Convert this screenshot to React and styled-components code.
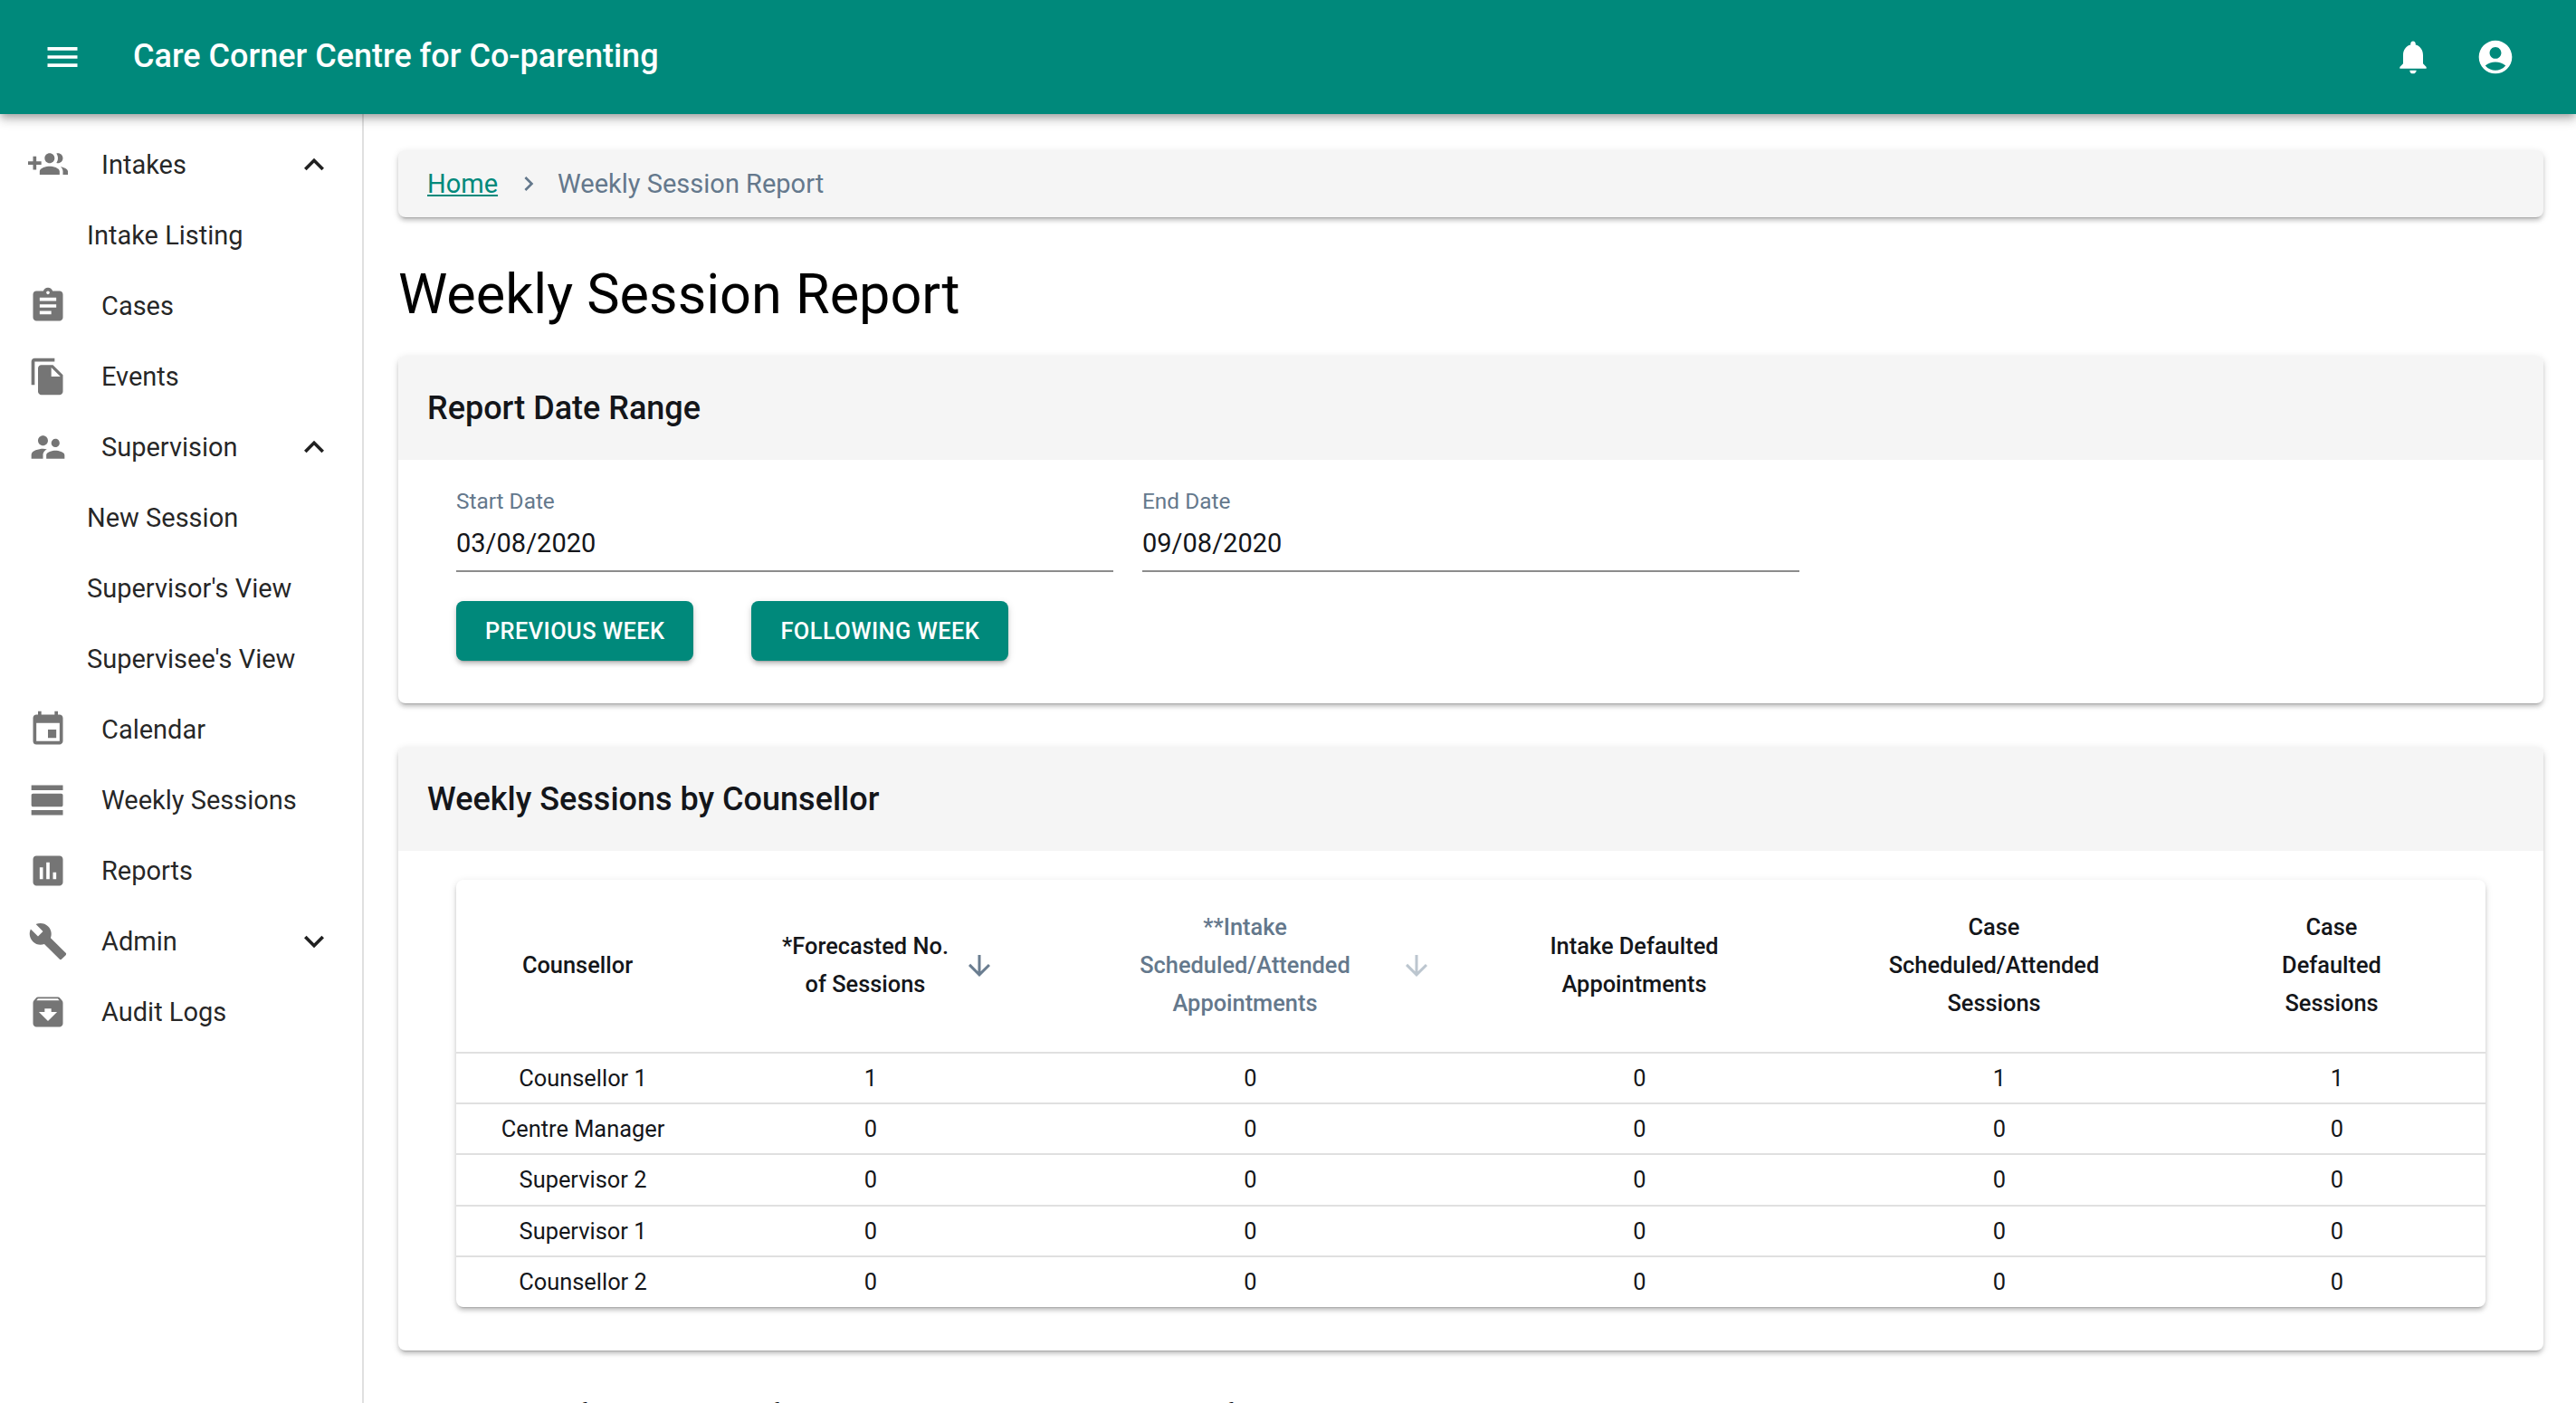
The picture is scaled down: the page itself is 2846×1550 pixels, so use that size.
import React from 'react';
import styled, { createGlobalStyle } from 'styled-components';
import {
  MdMenu, MdNotifications, MdAccountCircle, MdAssignment, MdFileCopy, MdSupervisorAccount,
  MdEvent, MdViewDay, MdAssessment, MdBuild, MdArchive, MdExpandLess, MdExpandMore,
  MdChevronRight, MdArrowDownward,
} from 'react-icons/md';

const Global = createGlobalStyle`
  html, body { margin: 0; padding: 0; background: #fff; }
  body { font-family: Roboto, "Liberation Sans", sans-serif; color: rgba(0,0,0,.87); }
  * { box-sizing: border-box; }
`;

const elevation2 = '0 5px 2px -4px rgba(0,0,0,.2), 0 4px 4px 0 rgba(0,0,0,.14), 0 2px 9px 0 rgba(0,0,0,.12)';

const GroupAddIcon = ({ size }) => (
  <svg width={size} height={size} viewBox="0 0 24 24" fill="currentColor" aria-hidden="true">
    <path d="M8 10H5V7H3v3H0v2h3v3h2v-3h3v-2zm10 1c1.66 0 2.99-1.34 2.99-3S19.66 5 18 5c-.32 0-.63.05-.91.14.57.81.9 1.79.9 2.86s-.34 2.04-.9 2.86c.28.09.59.14.91.14zm-5 0c1.66 0 3-1.34 3-3s-1.34-3-3-3-3 1.34-3 3 1.34 3 3 3zm6.62 2.16c.83.73 1.38 1.66 1.38 2.84v2h3v-2c0-1.54-2.37-2.49-4.38-2.84zM13 13c-2 0-6 1-6 3v2h12v-2c0-2-4-3-6-3z" />
  </svg>
);

const Page = styled.div`
  width: 2846px;
  height: 1550px;
  overflow: hidden;
  display: flex;
  flex-direction: column;
`;
const AppBar = styled.header`
  position: relative;
  z-index: 2;
  flex: 0 0 126px;
  display: flex;
  align-items: center;
  padding: 0 67px 0 47px;
  background: #00897b;
  color: #fff;
  box-shadow: 0 4px 7px -2px rgba(0,0,0,.2), 0 7px 9px 0 rgba(0,0,0,.14), 0 2px 18px 0 rgba(0,0,0,.12);
`;
const BrandTitle = styled.h1`
  margin: 0 0 0 56px;
  flex: 1;
  font-size: 36px;
  font-weight: 500;
  line-height: 1.6;
`;
const BarActions = styled.div`
  display: flex;
  gap: 47px;
`;
const Body = styled.div`
  flex: 1;
  display: flex;
  min-height: 0;
`;
const Sidebar = styled.nav`
  flex: 0 0 402px;
  border-right: 2px solid #e0e0e0;
  padding: 17px 31px 0 31px;
`;
const NavRow = styled.div`
  height: 78px;
  display: flex;
  align-items: center;
  padding-left: ${p => (p.$nested ? '65px' : '0')};
  font-size: 29px;
  color: rgba(0,0,0,.87);
`;
const NavIcon = styled.span`
  flex: 0 0 44px;
  height: 44px;
  margin-right: 37px;
  color: #757575;
  svg { display: block; }
`;
const NavLabel = styled.span`
  flex: 1;
`;
const Chevron = styled.span`
  flex: 0 0 44px;
  height: 44px;
  color: #212121;
  svg { display: block; }
`;
const Main = styled.main`
  flex: 1;
  min-width: 0;
  padding: 40px 36px 0 38px;
`;
const Breadcrumb = styled.div`
  height: 74px;
  display: flex;
  align-items: center;
  padding-left: 32px;
  background: #f5f5f5;
  border-radius: 8px;
  box-shadow: ${elevation2};
  font-size: 29px;
`;
const HomeLink = styled.a`
  color: #00897b;
  text-decoration: underline;
`;
const CrumbSep = styled.span`
  display: flex;
  margin: 0 16px 0 18px;
  color: #64788c;
`;
const Crumb = styled.span`
  color: #64788c;
`;
const PageTitle = styled.h2`
  margin: 0;
  padding: 49px 0 32px 0;
  font-size: 61.2px;
  font-weight: 400;
  line-height: 72px;
  color: #000;
`;
const Card = styled.section`
  background: #fff;
  border-radius: 8px;
  box-shadow: ${elevation2};
  margin-bottom: 48px;
  overflow: hidden;
`;
const CardHead = styled.div`
  height: 115px;
  display: flex;
  align-items: center;
  padding-left: 32px;
  background: #f5f5f5;
`;
const CardTitle = styled.h3`
  margin: 0;
  font-size: 36px;
  font-weight: 500;
  color: #14161a;
`;
const CardBody = styled.div`
  padding: ${p => p.$top}px 64px ${p => p.$bottom}px;
`;
const Fields = styled.div`
  display: flex;
  gap: 32px;
`;
const Field = styled.div`
  width: 726px;
  border-bottom: 2px solid #8c8c8c;
  height: 94px;
`;
const FieldLabel = styled.div`
  font-size: 24.4px;
  line-height: 32px;
  color: #64788c;
`;
const FieldValue = styled.div`
  margin-top: 14px;
  font-size: 29px;
  line-height: 32px;
  color: #14161a;
`;
const Buttons = styled.div`
  display: flex;
  gap: 64px;
  margin-top: 32px;
`;
const Button = styled.button`
  height: 66px;
  padding: 0 32px;
  border: 0;
  border-radius: 8px;
  background: #00897b;
  color: #fff;
  font-family: inherit;
  font-size: 25.4px;
  font-weight: 500;
  letter-spacing: .42px;
  text-transform: uppercase;
  box-shadow: ${elevation2};
`;
const Table = styled.table`
  width: 100%;
  table-layout: fixed;
  border-collapse: collapse;
  background: #fff;
  border-radius: 8px;
  box-shadow: ${elevation2};
`;
const Col = styled.col`
  width: ${p => p.$w}px;
`;
const HeadCell = styled.th`
  position: relative;
  height: 191px;
  padding: 0 12px 0 0;
  border-bottom: 2px solid #e0e0e0;
  font-size: 25.4px;
  font-weight: 500;
  line-height: 41.7px;
  text-align: center;
  color: ${p => (p.$muted ? '#64788c' : '#14161a')};
`;
const SortArrow = styled.span`
  position: absolute;
  top: 50%;
  right: 40px;
  transform: translateY(-50%);
  display: flex;
  color: ${p => (p.$faint ? '#bcc6cf' : '#6a7d90')};
`;
const Cell = styled.td`
  height: 56.2px;
  padding: 0;
  border-bottom: 2px solid #e0e0e0;
  font-size: 25.4px;
  text-align: center;
  color: #14161a;
  tr:last-child & { border-bottom: 0; }
`;
const Footnote = styled.p`
  margin: 0;
  padding-left: 77px;
  font-size: 25.4px;
  line-height: 40px;
  white-space: nowrap;
  color: #14161a;
`;

const nav = [
  { icon: GroupAddIcon, label: 'Intakes', chevron: MdExpandLess },
  { label: 'Intake Listing', nested: true },
  { icon: MdAssignment, label: 'Cases' },
  { icon: MdFileCopy, label: 'Events' },
  { icon: MdSupervisorAccount, label: 'Supervision', chevron: MdExpandLess },
  { label: 'New Session', nested: true },
  { label: "Supervisor's View", nested: true },
  { label: "Supervisee's View", nested: true },
  { icon: MdEvent, label: 'Calendar' },
  { icon: MdViewDay, label: 'Weekly Sessions' },
  { icon: MdAssessment, label: 'Reports' },
  { icon: MdBuild, label: 'Admin', chevron: MdExpandMore },
  { icon: MdArchive, label: 'Audit Logs' },
];

const columns = [280, 356, 483, 377, 418, 328];

const rows = [
  ['Counsellor 1', 1, 0, 0, 1, 1],
  ['Centre Manager', 0, 0, 0, 0, 0],
  ['Supervisor 2', 0, 0, 0, 0, 0],
  ['Supervisor 1', 0, 0, 0, 0, 0],
  ['Counsellor 2', 0, 0, 0, 0, 0],
];

export default function App() {
  return (
    <Page>
      <Global />
      <AppBar>
        <MdMenu size={44} />
        <BrandTitle>Care Corner Centre for Co-parenting</BrandTitle>
        <BarActions>
          <MdNotifications size={44} />
          <MdAccountCircle size={44} />
        </BarActions>
      </AppBar>
      <Body>
        <Sidebar>
          {nav.map(item => (
            <NavRow key={item.label} $nested={item.nested}>
              {item.icon && <NavIcon><item.icon size={44} /></NavIcon>}
              <NavLabel>{item.label}</NavLabel>
              {item.chevron && <Chevron><item.chevron size={44} /></Chevron>}
            </NavRow>
          ))}
        </Sidebar>
        <Main>
          <Breadcrumb>
            <HomeLink href="#">Home</HomeLink>
            <CrumbSep><MdChevronRight size={32} /></CrumbSep>
            <Crumb>Weekly Session Report</Crumb>
          </Breadcrumb>
          <PageTitle>Weekly Session Report</PageTitle>
          <Card>
            <CardHead><CardTitle>Report Date Range</CardTitle></CardHead>
            <CardBody $top={30} $bottom={47}>
              <Fields>
                <Field>
                  <FieldLabel>Start Date</FieldLabel>
                  <FieldValue>03/08/2020</FieldValue>
                </Field>
                <Field>
                  <FieldLabel>End Date</FieldLabel>
                  <FieldValue>09/08/2020</FieldValue>
                </Field>
              </Fields>
              <Buttons>
                <Button>Previous Week</Button>
                <Button>Following Week</Button>
              </Buttons>
            </CardBody>
          </Card>
          <Card>
            <CardHead><CardTitle>Weekly Sessions by Counsellor</CardTitle></CardHead>
            <CardBody $top={32} $bottom={48}>
              <Table>
                <colgroup>
                  {columns.map((w, i) => <Col key={i} $w={w} />)}
                </colgroup>
                <thead>
                  <tr>
                    <HeadCell>Counsellor</HeadCell>
                    <HeadCell>
                      *Forecasted No.<br />of Sessions
                      <SortArrow><MdArrowDownward size={36} /></SortArrow>
                    </HeadCell>
                    <HeadCell $muted>
                      **Intake<br />Scheduled/Attended<br />Appointments
                      <SortArrow $faint><MdArrowDownward size={36} /></SortArrow>
                    </HeadCell>
                    <HeadCell>Intake Defaulted<br />Appointments</HeadCell>
                    <HeadCell>Case<br />Scheduled/Attended<br />Sessions</HeadCell>
                    <HeadCell>Case<br />Defaulted<br />Sessions</HeadCell>
                  </tr>
                </thead>
                <tbody>
                  {rows.map(row => (
                    <tr key={row[0]}>
                      {row.map((value, i) => <Cell key={i}>{value}</Cell>)}
                    </tr>
                  ))}
                </tbody>
              </Table>
            </CardBody>
          </Card>
          <Footnote>*Number of sessions = sum of scheduled/attended appointments + sum of scheduled/attended sessions</Footnote>
        </Main>
      </Body>
    </Page>
  );
}
